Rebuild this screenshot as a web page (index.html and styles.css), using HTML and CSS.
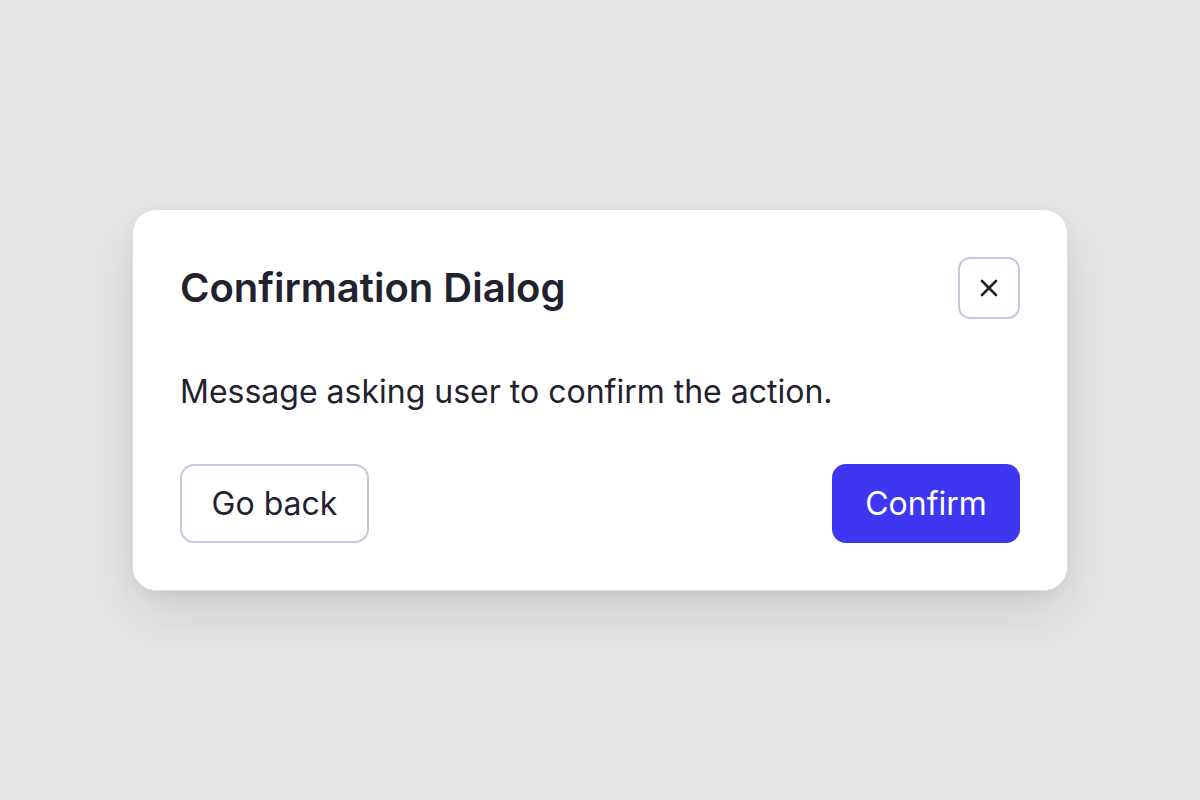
FILE: index.html
```html
<!DOCTYPE html>
<html lang="en">
<head>
<meta charset="utf-8">
<title>Confirmation Dialog</title>
<link rel="stylesheet" href="styles.css">
</head>
<body>
<main class="stage">
  <section class="dialog" role="dialog" aria-labelledby="dlg-title">
    <header class="dialog-header">
      <h1 id="dlg-title" class="dialog-title">Confirmation Dialog</h1>
      <button class="close-btn" aria-label="Close">
        <svg width="18" height="18" viewBox="0 0 18 18" fill="none" stroke="currentColor" stroke-width="2.6" stroke-linecap="round">
          <path d="M2 2 L16 16 M16 2 L2 16"/>
        </svg>
      </button>
    </header>
    <p class="dialog-message">Message asking user to confirm the action.</p>
    <footer class="dialog-actions">
      <button class="btn btn-secondary">Go back</button>
      <button class="btn btn-primary">Confirm</button>
    </footer>
  </section>
</main>
</body>
</html>
```
FILE: styles.css
```css
* { box-sizing: border-box; }
html, body { margin: 0; padding: 0; }
body {
  background: #e6e6e6;
  font-family: Inter, "Noto Sans", "Liberation Sans", sans-serif;
  color: #22212e;
}
.stage {
  width: 1200px;
  height: 800px;
  display: flex;
  align-items: center;
  justify-content: center;
}
.dialog {
  width: 936px;
  background: #ffffff;
  border: 1px solid #dedde5;
  border-radius: 24px;
  padding: 47px;
  display: flex;
  flex-direction: column;
  gap: 48px;
  box-shadow: 0 24px 48px rgba(0, 0, 0, 0.10), 0 4px 12px rgba(0, 0, 0, 0.05);
}
.dialog-header {
  display: flex;
  align-items: center;
  justify-content: space-between;
}
.dialog-title {
  margin: 0;
  font-size: 40px;
  font-weight: 600;
  color: #22212e;
  line-height: 1.2;
}
.close-btn {
  width: 62px;
  height: 62px;
  border: 2px solid #c9c7da;
  border-radius: 12px;
  background: #fff;
  color: #22212e;
  display: flex;
  align-items: center;
  justify-content: center;
  padding: 0;
}
.dialog-message {
  margin: 0;
  font-size: 32px;
  line-height: 49px;
  font-weight: 400;
  color: #22212e;
}
.dialog-actions {
  display: flex;
  justify-content: space-between;
  align-items: center;
}
.btn {
  font-family: inherit;
  font-size: 32px;
  font-weight: 400;
  height: 79px;
  border-radius: 14px;
  padding: 0;
  line-height: 1;
}
.btn-secondary {
  width: 189px;
  background: #fff;
  border: 2px solid #c9c7da;
  color: #22212e;
}
.btn-primary {
  width: 188px;
  background: #3d37f1;
  border: none;
  color: #ffffff;
}
```
